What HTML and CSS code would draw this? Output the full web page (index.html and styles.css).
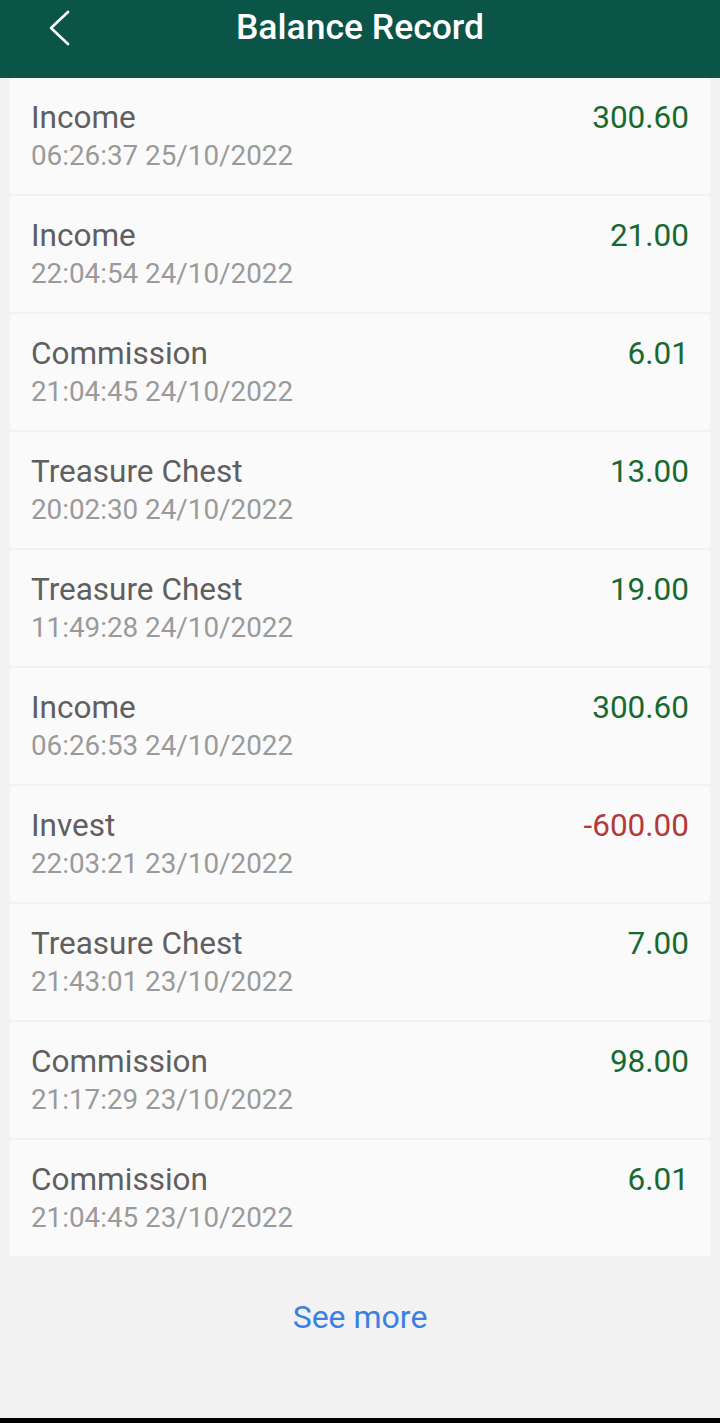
FILE: index.html
```html
<!DOCTYPE html>
<html lang="en">
<head>
    <meta charset="UTF-8">
    <meta name="viewport" content="width=device-width, initial-scale=1.0">
    <title>Balance Record</title>
    <link rel="stylesheet" href="styles.css">
</head>
<body>
    <div class="page">
        <div class="header">
            <a class="back" href="#">
                <svg width="26" height="36" viewBox="0 0 26 36">
                    <path d="M22 2 L5 18 L22 34" fill="none" stroke="#fff" stroke-width="2.6" stroke-linecap="round" stroke-linejoin="round"/>
                </svg>
            </a>
            <h1>Balance Record</h1>
        </div>

        <div class="record-list">
            <div class="record">
                <div class="info">
                    <div class="type">Income</div>
                    <div class="time">06:26:37 25/10/2022</div>
                </div>
                <div class="amount">300.60</div>
            </div>
            <div class="record">
                <div class="info">
                    <div class="type">Income</div>
                    <div class="time">22:04:54 24/10/2022</div>
                </div>
                <div class="amount">21.00</div>
            </div>
            <div class="record">
                <div class="info">
                    <div class="type">Commission</div>
                    <div class="time">21:04:45 24/10/2022</div>
                </div>
                <div class="amount">6.01</div>
            </div>
            <div class="record">
                <div class="info">
                    <div class="type">Treasure Chest</div>
                    <div class="time">20:02:30 24/10/2022</div>
                </div>
                <div class="amount">13.00</div>
            </div>
            <div class="record">
                <div class="info">
                    <div class="type">Treasure Chest</div>
                    <div class="time">11:49:28 24/10/2022</div>
                </div>
                <div class="amount">19.00</div>
            </div>
            <div class="record">
                <div class="info">
                    <div class="type">Income</div>
                    <div class="time">06:26:53 24/10/2022</div>
                </div>
                <div class="amount">300.60</div>
            </div>
            <div class="record">
                <div class="info">
                    <div class="type">Invest</div>
                    <div class="time">22:03:21 23/10/2022</div>
                </div>
                <div class="amount minus">-600.00</div>
            </div>
            <div class="record">
                <div class="info">
                    <div class="type">Treasure Chest</div>
                    <div class="time">21:43:01 23/10/2022</div>
                </div>
                <div class="amount">7.00</div>
            </div>
            <div class="record">
                <div class="info">
                    <div class="type">Commission</div>
                    <div class="time">21:17:29 23/10/2022</div>
                </div>
                <div class="amount">98.00</div>
            </div>
            <div class="record">
                <div class="info">
                    <div class="type">Commission</div>
                    <div class="time">21:04:45 23/10/2022</div>
                </div>
                <div class="amount">6.01</div>
            </div>
        </div>

        <div class="see-more">See more</div>
    </div>
    <div class="nav-bar"></div>
</body>
</html>
```

FILE: styles.css
```css
* {
    margin: 0;
    padding: 0;
    box-sizing: border-box;
}

body {
    font-family: Roboto, 'Noto Sans', sans-serif;
    background: #f2f2f2;
    height: 1423px;
    display: flex;
    flex-direction: column;
}

.page {
    flex: 1;
}

.header {
    background: #0a5547;
    height: 78px;
    position: relative;
    display: flex;
    justify-content: center;
}

.header h1 {
    color: #fff;
    font-size: 35.5px;
    font-weight: 500;
    line-height: 54px;
}

.back {
    position: absolute;
    left: 46px;
    top: 10px;
    display: block;
}

.record-list {
    margin: 0 10px;
    display: flex;
    flex-direction: column;
    gap: 2px;
}

.record {
    background: #fafafa;
    height: 116px;
    padding: 23px 21px 0;
    display: flex;
    justify-content: space-between;
    align-items: flex-start;
}

.type {
    color: #5f5f5f;
    font-size: 31.5px;
    line-height: 34px;
}

.time {
    color: #9a9a9a;
    font-size: 27.8px;
    line-height: 36px;
    margin-top: 3px;
}

.amount {
    color: #17692f;
    font-size: 31.5px;
    line-height: 34px;
}

.amount.minus {
    color: #b23a3a;
}

.see-more {
    text-align: center;
    color: #3a80e4;
    font-size: 32px;
    line-height: 40px;
    margin-top: 41px;
}

.nav-bar {
    height: 5px;
    background: #000;
}
```
